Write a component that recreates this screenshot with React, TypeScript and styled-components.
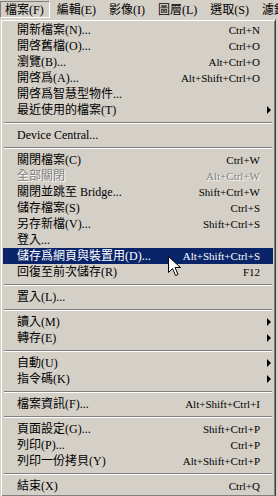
import React from 'react';
import styled, { createGlobalStyle } from 'styled-components';

const GlobalStyle = createGlobalStyle`
  html, body {
    margin: 0;
    padding: 0;
    background: #d4d0c8;
  }
  body {
    font-family: "Liberation Serif", "Noto Sans CJK TC", serif;
    font-size: 12px;
    color: #000;
  }
`;

const Screen = styled.div`
  position: relative;
  width: 278px;
  height: 496px;
  overflow: hidden;
  background: #d4d0c8;
`;

const MenuBar = styled.div`
  display: flex;
  align-items: center;
  height: 19px;
  background: #d4d0c8;
  white-space: nowrap;
  overflow: hidden;
`;

const BarItem = styled.div<{ pressed?: boolean }>`
  height: 17px;
  line-height: 17px;
  padding: 0 5px 0 4px;
  margin-right: 2px;
  box-sizing: border-box;
  border: 1px solid transparent;
  border-color: ${p => (p.pressed ? '#808080 #fff #fff #808080' : 'transparent')};
`;

const Panel = styled.div`
  width: 276px;
  box-sizing: border-box;
  border-style: solid;
  border-width: 1px;
  border-color: #d4d0c8 #404040 #404040 #d4d0c8;
  box-shadow: inset 1px 1px #fff, inset -1px -1px #808080;
  padding: 2px;
  background: #d4d0c8;
`;

const Item = styled.div<{ active?: boolean; disabled?: boolean }>`
  display: grid;
  grid-template-columns: 1fr auto 13px;
  align-items: center;
  height: 16px;
  padding-left: 14px;
  white-space: nowrap;
  background: ${p => (p.active ? '#0a246a' : 'transparent')};
  color: ${p => (p.active ? '#fff' : p.disabled ? '#808080' : '#000')};
  text-shadow: ${p => (p.disabled ? '1px 1px 0 #fff' : 'none')};
`;

const Label = styled.span`
  line-height: 16px;
`;

const Shortcut = styled.span`
  font-size: 11px;
  line-height: 16px;
  text-align: right;
`;

const SubArrow = styled.span`
  justify-self: end;
  margin-right: 2px;
  width: 0;
  height: 0;
  border-top: 4px solid transparent;
  border-bottom: 4px solid transparent;
  border-left: 4px solid #000;
`;

const Separator = styled.div`
  height: 9px;
  display: flex;
  align-items: center;
  padding: 0 1px;

  &::after {
    content: '';
    flex: 1;
    height: 0;
    border-top: 1px solid #808080;
    border-bottom: 1px solid #fff;
  }
`;

const Cursor = styled.svg`
  position: absolute;
  left: 168px;
  top: 256px;
`;

type Entry =
  | { sep: true }
  | { label: string; shortcut?: string; sub?: boolean; active?: boolean; disabled?: boolean };

const entries: Entry[] = [
  { label: '開新檔案(N)...', shortcut: 'Ctrl+N' },
  { label: '開啓舊檔(O)...', shortcut: 'Ctrl+O' },
  { label: '瀏覽(B)...', shortcut: 'Alt+Ctrl+O' },
  { label: '開啓爲(A)...', shortcut: 'Alt+Shift+Ctrl+O' },
  { label: '開啓爲智慧型物件...' },
  { label: '最近使用的檔案(T)', sub: true },
  { sep: true },
  { label: 'Device Central...' },
  { sep: true },
  { label: '關閉檔案(C)', shortcut: 'Ctrl+W' },
  { label: '全部關閉', shortcut: 'Alt+Ctrl+W', disabled: true },
  { label: '關閉並跳至 Bridge...', shortcut: 'Shift+Ctrl+W' },
  { label: '儲存檔案(S)', shortcut: 'Ctrl+S' },
  { label: '另存新檔(V)...', shortcut: 'Shift+Ctrl+S' },
  { label: '登入...' },
  { label: '儲存爲網頁與裝置用(D)...', shortcut: 'Alt+Shift+Ctrl+S', active: true },
  { label: '回復至前次儲存(R)', shortcut: 'F12' },
  { sep: true },
  { label: '置入(L)...' },
  { sep: true },
  { label: '讀入(M)', sub: true },
  { label: '轉存(E)', sub: true },
  { sep: true },
  { label: '自動(U)', sub: true },
  { label: '指令碼(K)', sub: true },
  { sep: true },
  { label: '檔案資訊(F)...', shortcut: 'Alt+Shift+Ctrl+I' },
  { sep: true },
  { label: '頁面設定(G)...', shortcut: 'Shift+Ctrl+P' },
  { label: '列印(P)...', shortcut: 'Ctrl+P' },
  { label: '列印一份拷貝(Y)', shortcut: 'Alt+Shift+Ctrl+P' },
  { sep: true },
  { label: '結束(X)', shortcut: 'Ctrl+Q' },
];

const barItems = ['檔案(F)', '編輯(E)', '影像(I)', '圖層(L)', '選取(S)', '濾鏡'];

const App: React.FC = () => {
  return (
    <Screen>
      <GlobalStyle />
      <MenuBar>
        {barItems.map((name, i) => (
          <BarItem key={name} pressed={i === 0}>
            {name}
          </BarItem>
        ))}
      </MenuBar>
      <Panel>
        {entries.map((e, i) =>
          'sep' in e ? (
            <Separator key={i} />
          ) : (
            <Item key={i} active={e.active} disabled={e.disabled}>
              <Label>{e.label}</Label>
              <Shortcut>{e.shortcut}</Shortcut>
              {e.sub ? <SubArrow /> : <span />}
            </Item>
          )
        )}
      </Panel>
      {/* mouse pointer hovering the highlighted item */}
      <Cursor width="14" height="22" viewBox="0 0 14 22">
        <path
          d="M0.5 0.5 L0.5 16.5 L4.5 12.5 L7.5 19.5 L10 18.5 L7 11.5 L12.5 11.5 Z"
          fill="#fff"
          stroke="#000"
          strokeWidth="1"
        />
      </Cursor>
    </Screen>
  );
};

export default App;
